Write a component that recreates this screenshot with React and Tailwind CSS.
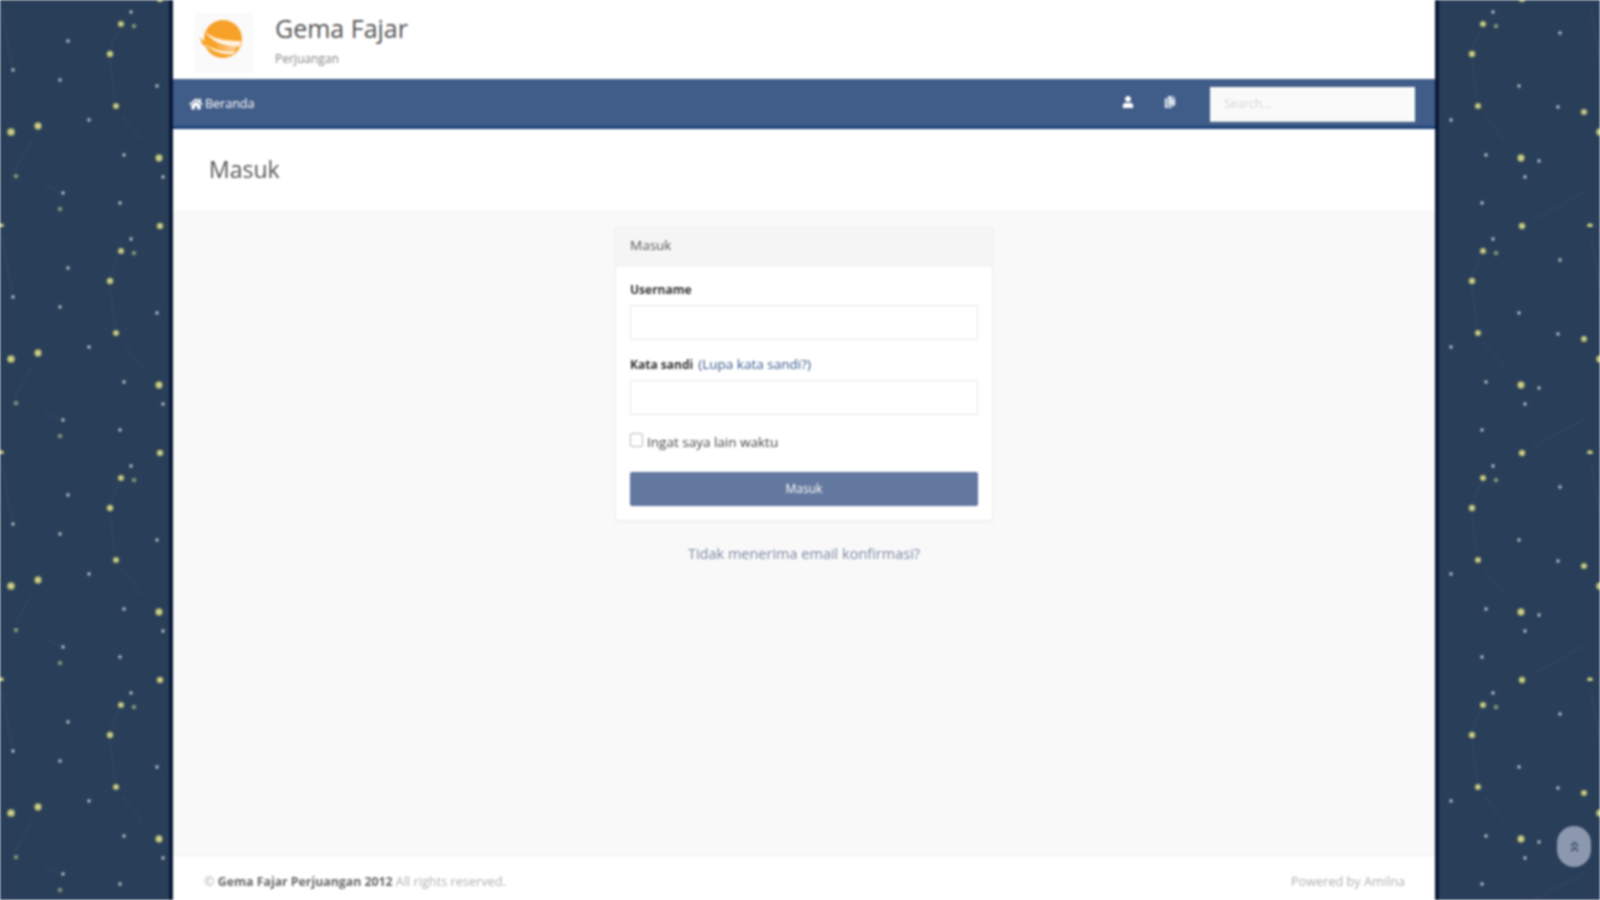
import { FaHome, FaUser, FaCopy, FaAngleDoubleUp } from "react-icons/fa";

// star tile, repeats every 227px
const bigStars = [
  [121, 24, 2.8], [110, 54, 3], [116, 106, 2.8], [11, 132, 3.6], [38, 126, 3.4],
  [159, 158, 3.4], [160, 226, 3], [160, -1, 3], [1, 226, 2.6], [228, 226, 2.6], [222, 112, 2.8],
];
const smallStars = [
  [131, 12], [68, 41], [13, 70], [60, 80], [157, 86], [89, 120], [124, 155],
  [163, 177], [63, 193], [120, 203], [198, 33], [196, 107], [177, 161],
];
const dimStars = [[134, 26], [16, 176], [60, 209]];
const lines = [
  [118, 30, 110, 50], [110, 60, 115, 100], [122, 115, 143, 141], [32, 140, 15, 170],
  [2, 10, 12, 65], [45, 185, 60, 192], [171, 220, 222, 192], [229, 10, 239, 65],
];

function StarField({ id, offsetX }) {
  return (
    <svg className="block w-full h-full">
      <defs>
        <pattern id={id} width="227" height="227" patternUnits="userSpaceOnUse" patternTransform={`translate(${offsetX} 0)`}>
          {lines.map((l, i) => (
            <line key={i} x1={l[0]} y1={l[1]} x2={l[2]} y2={l[3]} stroke="#4a6272" strokeWidth="1" opacity="0.3" />
          ))}
          {bigStars.map((s, i) => (
            <g key={i}>
              <circle cx={s[0]} cy={s[1]} r={s[2] + 1} fill="#7f8f60" opacity="0.45" />
              <circle cx={s[0]} cy={s[1]} r={s[2]} fill="#b9bd74" />
              <circle cx={s[0]} cy={s[1]} r={s[2] * 0.45} fill="#dcdca4" />
            </g>
          ))}
          {smallStars.map((s, i) => (
            <g key={i}>
              <circle cx={s[0]} cy={s[1]} r="2.4" fill="#6f8391" opacity="0.6" />
              <circle cx={s[0]} cy={s[1]} r="1.2" fill="#c5cfd3" />
            </g>
          ))}
          {dimStars.map((s, i) => (
            <g key={i}>
              <circle cx={s[0]} cy={s[1]} r="2.6" fill="#7b8f72" opacity="0.7" />
              <circle cx={s[0]} cy={s[1]} r="1" fill="#a7b592" />
            </g>
          ))}
        </pattern>
      </defs>
      <rect width="100%" height="100%" fill="#293e59" />
      <rect width="100%" height="100%" fill={`url(#${id})`} />
    </svg>
  );
}

function Logo() {
  return (
    <svg viewBox="0 0 60 60" className="w-[60px] h-[60px]">
      <rect width="60" height="60" fill="#fafafa" />
      <circle cx="29" cy="26" r="19" fill="#f7a128" />
      <path d="M7 15 C12 23 22 28 34 29 L46 30 C36 34 22 32 14 25 Z" fill="#f7a128" />
      <path d="M6 24 C12 32 22 35 36 35 C26 39 14 37 8 31 Z" fill="#f7a128" />
      <path d="M9 16 C14 23 24 28 47 28 C47 30 46 32 45 34 C30 34 17 29 9 16Z" fill="#fff3e2" />
      <path d="M10 30 C17 36 28 39 42 38 L39 41 C28 42 17 38 10 30Z" fill="#fff3e2" />
      <path d="M20 31 C28 35 36 35 44 32 L41 37 C34 38 27 36 20 31Z" fill="#fbc98a" />
    </svg>
  );
}

export default function App() {
  return (
    <div className="flex h-screen overflow-hidden blur-[0.8px] font-['Open_Sans',sans-serif] text-[#333]">
      <div className="w-[169px] shrink-0">
        <StarField id="stars-left" offsetX={0} />
      </div>

      <div className="w-[1270px] shrink-0 flex flex-col border-x-4 border-[#0a1a38] bg-white">
        {/* Header */}
        <div className="h-[79px] shrink-0 flex items-start pl-[21px] pt-[13px]">
          <Logo />
          <div className="ml-[21px] -mt-[3px]">
            <div className="text-[25px] leading-[36px] text-[#555]">Gema Fajar</div>
            <div className="text-[12px] leading-[18px] mt-[4px] text-[#888]">Perjuangan</div>
          </div>
        </div>

        {/* Nav */}
        <div className="h-[50px] shrink-0 flex items-center bg-[#405c88] border-b-[3px] border-[#1d4379] text-white pl-[16px] pr-[20px]">
          <a className="flex items-center gap-[2px] text-[12.5px] mt-[3px]">
            <FaHome className="text-[14px]" />
            Beranda
          </a>
          <div className="ml-auto flex items-center mt-[3px]">
            <FaUser className="text-[12px] mr-[30px] -mt-[4px]" />
            <FaCopy className="text-[12px] text-[#d5deea] mr-[34px] -mt-[5px]" />
            <div className="w-[205px] h-[35px] bg-[#fafafa] border-b border-[#d8dce2] pl-[14px] text-[12px] leading-[34px] text-[#d5d5d5]">
              Search...
            </div>
          </div>
        </div>

        {/* Page title */}
        <div className="h-[82px] shrink-0 pl-[36px] pt-[22px] text-[23px] leading-[36px] text-[#555]">Masuk</div>

        {/* Login form */}
        <div className="flex-1 bg-[#f9f9f9] pt-[16px]">
          <div className="w-[378px] bg-white border border-[#f0f0f0] shadow-xs ml-[442px]">
            <div className="h-[39px] bg-[#f5f5f5] pl-[14px] text-[13.5px] leading-[34px] text-[#555]">Masuk</div>
            <div className="px-[14px] pt-[14px] pb-[14px]">
              <label className="block text-[12px] font-bold leading-[18px] text-[#333]">Username</label>
              <div className="mt-[6px] h-[35px] border border-[#e6e6e6] bg-white" />
              <label className="block mt-[15px] text-[12px] font-bold leading-[18px] text-[#333]">
                Kata sandi <a className="ml-[2px] font-normal text-[13.5px] text-[#35578c]">(Lupa kata sandi?)</a>
              </label>
              <div className="mt-[6px] h-[35px] border border-[#e6e6e6] bg-white" />
              <div className="mt-[18px] flex items-center gap-[4px]">
                <span className="w-[13px] h-[14px] -mt-[5px] rounded-[2px] border border-[#bbb] bg-white" />
                <span className="text-[13.5px] leading-[18px] text-[#444]">Ingat saya lain waktu</span>
              </div>
              <button className="block w-full mt-[21px] h-[34px] rounded-[2px] bg-[#64799f] border border-[#5b70a0] text-white text-[12px]">
                Masuk
              </button>
            </div>
          </div>
          <div className="ml-[442px] w-[378px] mt-[23px] text-center text-[14.5px] leading-[20px] text-[#7c8aa3]">
            Tidak menerima email konfirmasi?
          </div>
        </div>

        {/* Footer */}
        <div className="h-[45px] shrink-0 border-t border-[#f0f0f0] flex items-center justify-between pl-[31px] pr-[30px] pt-[8px] text-[12.7px] text-[#b0b0b0]">
          <span>
            © <b className="text-[12.3px] text-[#666]">Gema Fajar Perjuangan 2012</b> All rights reserved.
          </span>
          <span>Powered by Amilna</span>
        </div>
      </div>

      <div className="flex-1">
        <StarField id="stars-right" offsetX={-77} />
      </div>

      <a className="fixed left-[1557px] top-[826px] w-[34px] h-[41px] rounded-full bg-[#8c98ae] flex items-center justify-center text-[#4c5c78]">
        <FaAngleDoubleUp className="text-[13px]" />
      </a>
    </div>
  );
}
